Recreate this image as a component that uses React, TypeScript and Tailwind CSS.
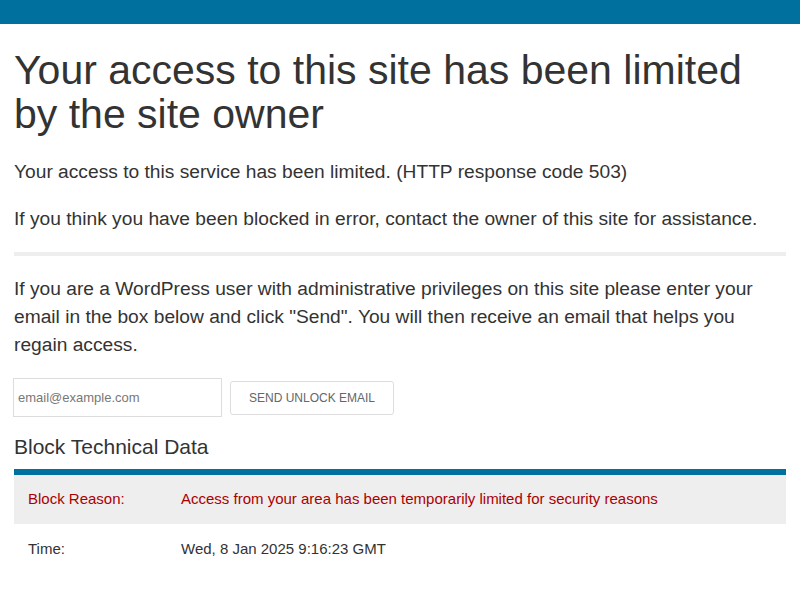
import React from "react";

export default function App() {
  return (
    <div className="min-h-[600px] bg-white text-[#333] font-['Liberation_Sans','Arial',sans-serif]">
      <div className="h-[24px] bg-[#00709e]" />
      <div className="px-[14px]">
        <h1 className="mt-[24px] text-[41px] leading-[44px] font-normal">
          Your access to this site has been limited by the site owner
        </h1>
        <p className="mt-[22px] text-[19.2px] leading-[28px]">
          Your access to this service has been limited. (HTTP response code 503)
        </p>
        <p className="mt-[19px] text-[19.2px] leading-[28px]">
          If you think you have been blocked in error, contact the owner of this site for assistance.
        </p>
        <div className="mt-[19px] h-[4px] bg-[#eeeeee]" />
        <p className="mt-[19px] text-[19.2px] leading-[28px]">
          If you are a WordPress user with administrative privileges on this site please enter your email in the box below and click "Send". You will then receive an email that helps you regain access.
        </p>
        <div className="mt-[19px] flex items-center gap-[8px]">
          <input
            type="text"
            placeholder="email@example.com"
            className="-ml-px w-[209px] h-[39px] border border-[#dddddd] px-[4px] text-[13px] placeholder:text-[#777] outline-none"
          />
          <button className="w-[164px] h-[34px] rounded-[3px] border border-[#dddddd] bg-white text-[12px] text-[#666]">
            SEND UNLOCK EMAIL
          </button>
        </div>
        <h2 className="mt-[16px] text-[21px] leading-[28px] font-normal">Block Technical Data</h2>
        <div className="mt-[8px] border-t-[6px] border-[#00709e] text-[15px]">
          <div className="flex h-[49px] items-center bg-[#eeeeee] text-[#aa0000]">
            <div className="w-[167px] pl-[14px]">Block Reason:</div>
            <div>Access from your area has been temporarily limited for security reasons</div>
          </div>
          <div className="flex h-[50px] items-center">
            <div className="w-[167px] pl-[14px]">Time:</div>
            <div>Wed, 8 Jan 2025 9:16:23 GMT</div>
          </div>
        </div>
      </div>
    </div>
  );
}
